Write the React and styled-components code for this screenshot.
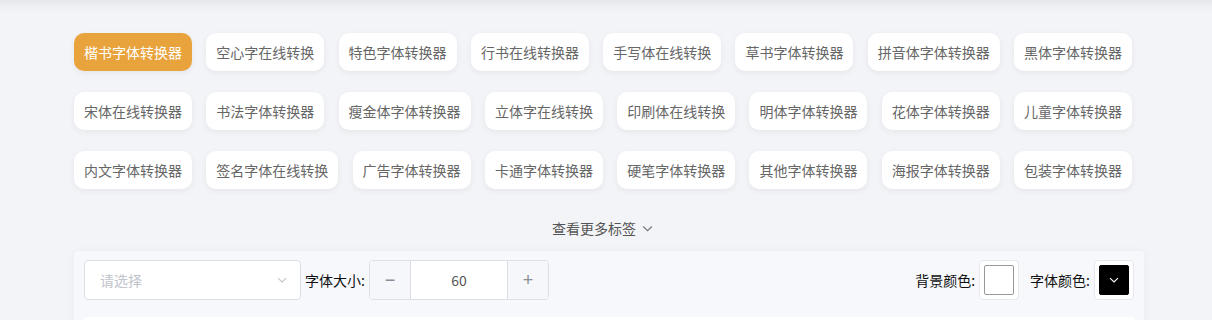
import React, { useState } from 'react'
import styled, { createGlobalStyle } from 'styled-components'

const GlobalStyle = createGlobalStyle`
    html, body {
        margin: 0;
        padding: 0;
        background: #f3f4f8;
        font-family: "Liberation Sans", "Noto Sans CJK SC", sans-serif;
    }
`;

const tags = [
    '楷书字体转换器', '空心字在线转换', '特色字体转换器', '行书在线转换器',
    '手写体在线转换', '草书字体转换器', '拼音体字体转换器', '黑体字体转换器',
    '宋体在线转换器', '书法字体转换器', '瘦金体字体转换器', '立体字在线转换',
    '印刷体在线转换', '明体字体转换器', '花体字体转换器', '儿童字体转换器',
    '内文字体转换器', '签名字体在线转换', '广告字体转换器', '卡通字体转换器',
    '硬笔字体转换器', '其他字体转换器', '海报字体转换器', '包装字体转换器',
];

const Page = styled.div`
    width: 100%;
    height: 320px;
    overflow: hidden;
    background: linear-gradient(#e6e7eb 0px, #eeeff3 6px, #f3f4f8 14px);
`;

const Container = styled.div`
    width: 1070px;
    margin-left: 74px;
    padding-top: 33px;
`;

const TagList = styled.div`
    display: flex;
    flex-wrap: wrap;
    column-gap: 14.3px;
    row-gap: 21px;
    width: 1066px;
`;

const Tag = styled.div`
    height: 38px;
    padding: 0 10px;
    display: flex;
    align-items: center;
    border-radius: 10px;
    font-size: 14px;
    font-family: "Noto Sans CJK SC", sans-serif;
    color: ${p => (p.$active ? '#ffffff' : '#666666')};
    background: ${p => (p.$active ? '#e8a33c' : '#ffffff')};
    box-shadow: 0 2px 6px rgba(0, 0, 0, 0.06);
    cursor: pointer;
    box-sizing: border-box;
`;

const More = styled.div`
    display: flex;
    justify-content: center;
    align-items: center;
    gap: 5px;
    margin-top: 29px;
    height: 20px;
    font-size: 14px;
    font-family: "Noto Sans CJK SC", sans-serif;
    color: #555555;
    padding-right: 12px;
`;

const Panel = styled.div`
    margin-top: 13px;
    background: #f7f8fb;
    border-radius: 4px;
    box-shadow: 0 0 8px rgba(0, 0, 0, 0.04);
    padding: 9px 10px 0 10px;
    height: 80px;
`;

const Toolbar = styled.div`
    display: flex;
    align-items: center;
`;

const Select = styled.div`
    width: 217px;
    height: 40px;
    box-sizing: border-box;
    border: 1px solid #dcdfe6;
    border-radius: 4px;
    background: #fff;
    display: flex;
    align-items: center;
    justify-content: space-between;
    padding: 0 12px 0 15px;
    font-size: 14px;
    font-family: "Noto Sans CJK SC", sans-serif;
    color: #c0c4cc;
`;

const Label = styled.span`
    font-size: 14px;
    font-family: "Noto Sans CJK SC", sans-serif;
    color: #111;
    margin: 0 4px;
    white-space: nowrap;
`;

const NumberBox = styled.div`
    display: flex;
    height: 40px;
    width: 180px;
    box-sizing: border-box;
    border: 1px solid #dcdfe6;
    border-radius: 4px;
    overflow: hidden;
    background: #fff;
`;

const StepBtn = styled.div`
    width: 40px;
    display: flex;
    align-items: center;
    justify-content: center;
    background: #f5f7fa;
    color: #8a8d93;
    font-size: 18px;
    border-left: ${p => (p.$side === 'right' ? '1px solid #dcdfe6' : 'none')};
    border-right: ${p => (p.$side === 'left' ? '1px solid #dcdfe6' : 'none')};
`;

const NumberValue = styled.div`
    flex: 1;
    display: flex;
    align-items: center;
    justify-content: center;
    font-size: 14px;
    font-family: "Noto Sans CJK SC", sans-serif;
    color: #555;
`;

const Spacer = styled.div`
    flex: 1;
`;

const ColorGroup = styled.div`
    display: flex;
    align-items: center;
    margin-left: ${p => p.$ml || 0}px;
`;

const ColorBox = styled.div`
    width: 40px;
    height: 40px;
    box-sizing: border-box;
    border: 1px solid #e6e8ed;
    border-radius: 4px;
    background: #fff;
    display: flex;
    align-items: center;
    justify-content: center;
`;

const Swatch = styled.div`
    width: 30px;
    height: 30px;
    box-sizing: border-box;
    border: 1px solid ${p => (p.$color === '#000' ? '#000' : '#999')};
    border-radius: 2px;
    background: ${p => p.$color};
    display: flex;
    align-items: center;
    justify-content: center;
`;

const TextArea = styled.div`
    margin-top: 17px;
    height: 20px;
    background: #fff;
    border-radius: 4px 4px 0 0;
`;

const Chevron = ({ color = '#999', size = 12 }) => (
    <svg width={size} height={size} viewBox="0 0 12 12">
        <path d="M2 4.2 L6 8 L10 4.2" fill="none" stroke={color} strokeWidth="1.1" />
    </svg>
);

export default function App() {
    const [active, setActive] = useState(0);
    return (
        <Page>
            <GlobalStyle />
            <Container>
                <TagList>
                    {tags.map((t, i) => (
                        <Tag key={t} $active={i === active} onClick={() => setActive(i)}>{t}</Tag>
                    ))}
                </TagList>
                <More>
                    查看更多标签
                    <Chevron color="#777" size={13} />
                </More>
                <Panel>
                    <Toolbar>
                        <Select>
                            请选择
                            <Chevron color="#c0c4cc" size={12} />
                        </Select>
                        <Label>字体大小:</Label>
                        <NumberBox>
                            <StepBtn $side="left">−</StepBtn>
                            <NumberValue>60</NumberValue>
                            <StepBtn $side="right">+</StepBtn>
                        </NumberBox>
                        <Spacer />
                        <ColorGroup>
                            <Label>背景颜色:</Label>
                            <ColorBox><Swatch $color="#fff" /></ColorBox>
                        </ColorGroup>
                        <ColorGroup $ml={7}>
                            <Label>字体颜色:</Label>
                            <ColorBox>
                                <Swatch $color="#000">
                                    <Chevron color="#fff" size={12} />
                                </Swatch>
                            </ColorBox>
                        </ColorGroup>
                    </Toolbar>
                    <TextArea />
                </Panel>
            </Container>
        </Page>
    );
}
